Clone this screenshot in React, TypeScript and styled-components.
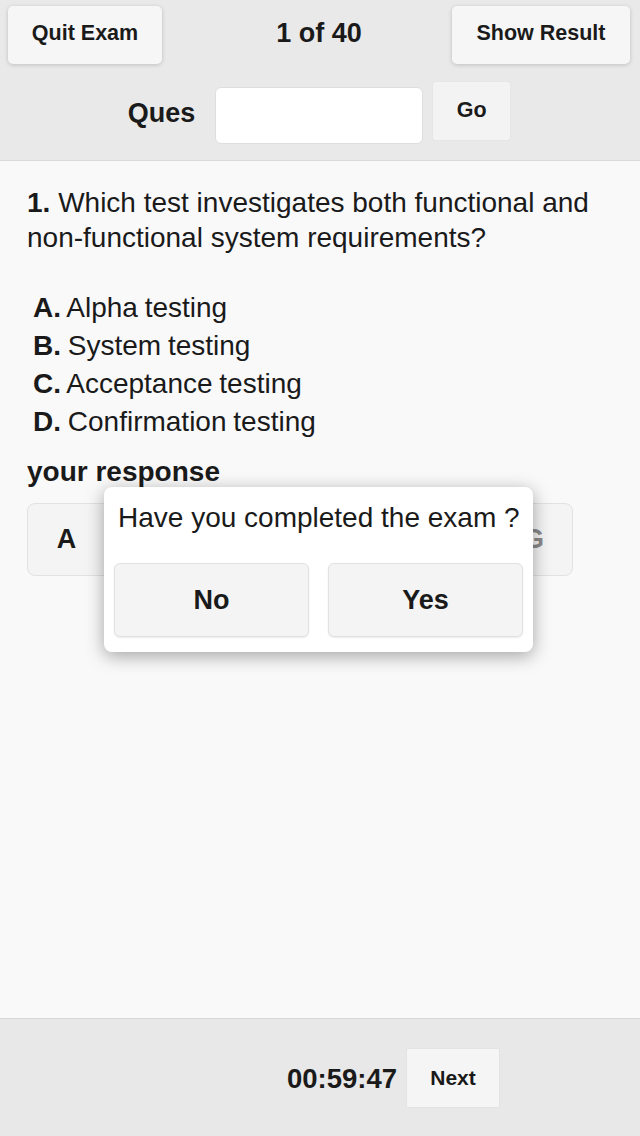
import React from "react";
import styled, { createGlobalStyle } from "styled-components";

const Global = createGlobalStyle`
  html, body { margin: 0; padding: 0; }
  body { font-family: "Liberation Sans", Arial, Helvetica, sans-serif; color: #1a1a1a; }
  * { box-sizing: border-box; }
`;

const Page = styled.div`
  width: 640px;
  height: 1136px;
  display: flex;
  flex-direction: column;
  background: #f9f9fa;
  overflow: hidden;
`;

const Header = styled.header`
  height: 161px;
  background: #e9e9e9;
  border-bottom: 1px solid #d9d9d9;
  padding: 6px 10px 0 8px;
  display: flex;
  flex-direction: column;
`;

const TopRow = styled.div`
  display: flex;
  align-items: center;
  justify-content: space-between;
  height: 58px;
`;

const ToolButton = styled.button<{ $w: number }>`
  width: ${(p) => p.$w}px;
  height: 58px;
  border: none;
  border-radius: 5px;
  background: #f6f6f6;
  box-shadow: 0 1px 4px rgba(0, 0, 0, 0.18);
  font-family: inherit;
  font-weight: bold;
  font-size: 21.5px;
  color: #1a1a1a;
  padding: 0 0 3px 0;
`;

const Counter = styled.div`
  font-weight: bold;
  font-size: 27px;
  margin-left: 24px;
  margin-bottom: 4px;
`;

const SearchRow = styled.div`
  display: flex;
  align-items: center;
  justify-content: center;
  gap: 20px;
  margin-top: 13px;
`;

const QuesLabel = styled.span`
  font-weight: bold;
  font-size: 27px;
  margin-top: 6px;
`;

const QuesInput = styled.input`
  width: 208px;
  height: 57px;
  border: 1px solid #dedede;
  border-radius: 6px;
  background: #ffffff;
  margin-top: 10px;
`;

const GoButton = styled.button`
  width: 77px;
  height: 58px;
  margin-left: -10px;
  border: none;
  border-radius: 2px;
  background: #f3f3f3;
  box-shadow: 0 0 1px rgba(0, 0, 0, 0.12);
  font-family: inherit;
  font-weight: bold;
  font-size: 21.5px;
  color: #1a1a1a;
  padding: 0;
`;

const Content = styled.main`
  flex: 1;
  position: relative;
  padding: 24px 27px 0 27px;
`;

const Question = styled.p`
  margin: 0;
  font-size: 28px;
  line-height: 35px;
`;

const OptionList = styled.ul`
  list-style: none;
  margin: 34px 0 0 6px;
  padding: 0;
`;

const Option = styled.li`
  font-size: 28px;
  line-height: 38px;
  word-spacing: -1px;
`;

const ResponseLabel = styled.div`
  margin-top: 16px;
  font-size: 28px;
  font-weight: bold;
  line-height: 30px;
`;

const Segmented = styled.div`
  margin-top: 16px;
  width: 546px;
  height: 73px;
  display: flex;
  border: 1px solid #e2e2e2;
  border-radius: 8px;
  background: #f4f4f4;
  overflow: hidden;
`;

const Segment = styled.div`
  flex: 1;
  display: flex;
  align-items: center;
  justify-content: center;
  font-weight: bold;
  font-size: 27px;
  color: #1a1a1a;
  border-right: 1px solid #e2e2e2;
  &:last-child { border-right: none; color: #8a8a8a; }
`;

const Dialog = styled.div`
  position: absolute;
  left: 104px;
  top: 326px;
  width: 429px;
  height: 165px;
  background: #ffffff;
  border-radius: 8px;
  box-shadow: 0 4px 18px rgba(0, 0, 0, 0.35);
  padding: 14px 10px 0 10px;
`;

const DialogText = styled.div`
  font-size: 28px;
  line-height: 34px;
  padding-left: 4px;
  white-space: nowrap;
`;

const DialogButtons = styled.div`
  display: flex;
  gap: 19px;
  margin-top: 28px;
`;

const DialogButton = styled.button`
  flex: 1;
  height: 74px;
  border: 1px solid #e1e1e1;
  border-radius: 6px;
  background: #f4f4f4;
  box-shadow: 0 1px 2px rgba(0, 0, 0, 0.08);
  font-family: inherit;
  font-weight: bold;
  font-size: 27px;
  color: #1a1a1a;
`;

const Footer = styled.footer`
  height: 118px;
  background: #e8e8e8;
  border-top: 1px solid #d8d8d8;
  display: flex;
  align-items: center;
  justify-content: flex-end;
  padding: 0 141px 0 0;
  gap: 10px;
`;

const Timer = styled.span`
  font-weight: bold;
  font-size: 27.5px;
  margin-top: 2px;
`;

const NextButton = styled.button`
  width: 92px;
  height: 58px;
  border: none;
  background: #f5f5f5;
  box-shadow: 0 0 1px rgba(0, 0, 0, 0.12);
  font-family: inherit;
  font-weight: bold;
  font-size: 21px;
  color: #1a1a1a;
`;

const options = [
  ["A.", "Alpha testing"],
  ["B.", "System testing"],
  ["C.", "Acceptance testing"],
  ["D.", "Confirmation testing"],
];

export default function App() {
  return (
    <>
      <Global />
      <Page>
        <Header>
          <TopRow>
            <ToolButton $w={154}>Quit Exam</ToolButton>
            <Counter>1 of 40</Counter>
            <ToolButton $w={178}>Show Result</ToolButton>
          </TopRow>
          <SearchRow>
            <QuesLabel>Ques</QuesLabel>
            <QuesInput />
            <GoButton>Go</GoButton>
          </SearchRow>
        </Header>
        <Content>
          <Question>
            <b>1.</b> Which test investigates both functional and non-functional system requirements?
          </Question>
          <OptionList>
            {options.map(([k, v]) => (
              <Option key={k}>
                <b>{k}</b> {v}
              </Option>
            ))}
          </OptionList>
          <ResponseLabel>your response</ResponseLabel>
          <Segmented>
            {["A", "B", "C", "D", "E", "F", "G"].map((l) => (
              <Segment key={l}>{l}</Segment>
            ))}
          </Segmented>
          <Dialog>
            <DialogText>Have you completed the exam ?</DialogText>
            <DialogButtons>
              <DialogButton>No</DialogButton>
              <DialogButton>Yes</DialogButton>
            </DialogButtons>
          </Dialog>
        </Content>
        <Footer>
          <Timer>00:59:47</Timer>
          <NextButton>Next</NextButton>
        </Footer>
      </Page>
    </>
  );
}
